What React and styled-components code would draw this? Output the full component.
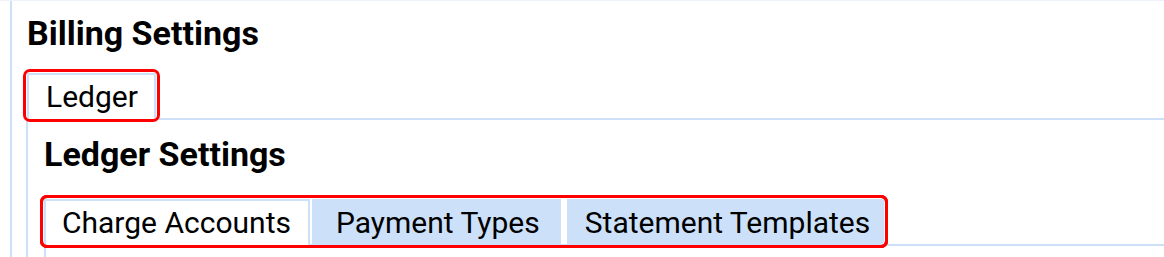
import React from 'react';
import styled, { createGlobalStyle } from 'styled-components';

const Global = createGlobalStyle`
  html, body {
    margin: 0;
    background: #fff;
    font-family: Roboto, 'Liberation Sans', sans-serif;
    color: #000;
  }
`;

const Page = styled.div`
  height: 257px;
  overflow: hidden;
  border-top: 1px solid #eef3fb;
`;

const Panel = styled.div`
  margin-left: 10px;
  padding-left: 15px;
  border-left: 2px solid #cce0fa;
  min-height: 260px;
`;

const Heading = styled.h2`
  margin: 0;
  padding-top: ${props => props.top || '15px'};
  font-size: 34px;
  font-weight: 700;
  line-height: 34px;
`;

const TabRow = styled.div`
  display: flex;
  margin-top: ${props => props.top || '23px'};
  border-bottom: 2px solid #cce0fa;
`;

const TabGroup = styled.div`
  position: relative;
  display: flex;

  ::after {
    content: '';
    position: absolute;
    inset: -4px;
    border: 3px solid #ff0000;
    border-radius: 7px;
    pointer-events: none;
  }
`;

const Tab = styled.div`
  height: 43px;
  margin-bottom: -2px;
  margin-left: ${props => props.gap || '0'};
  padding: ${props => props.pad || '0 18px'};
  display: flex;
  align-items: center;
  font-size: 30px;
  white-space: nowrap;
  background: ${props => props.active ? '#fff' : '#cce0fa'};
  border: 2px solid #cce0fa;
  border-bottom-color: ${props => props.active ? '#fff' : '#cce0fa'};
`;

const SubPanel = styled.div`
  margin-left: -1px;
  padding-left: 16px;
  border-left: 2px solid #cce0fa;
  min-height: 200px;
`;

const InnerBody = styled.div`
  border-left: 2px solid #cce0fa;
  min-height: 60px;
`;

export default function App() {
  return (
    <Page>
      <Global />
      <Panel>
        <Heading>Billing Settings</Heading>
        <TabRow>
          <TabGroup>
            <Tab active pad="0 16px 0 17px">Ledger</Tab>
          </TabGroup>
        </TabRow>
        <SubPanel>
          <Heading top="17px">Ledger Settings</Heading>
          <TabRow top="28px">
            <TabGroup>
              <Tab active pad="0 17px 0 16px">Charge Accounts</Tab>
              <Tab gap="2px" pad="0 19px 0 22px">Payment Types</Tab>
              <Tab gap="6px" pad="0 12px 0 16px">Statement Templates</Tab>
            </TabGroup>
          </TabRow>
          <InnerBody />
        </SubPanel>
      </Panel>
    </Page>
  );
}
